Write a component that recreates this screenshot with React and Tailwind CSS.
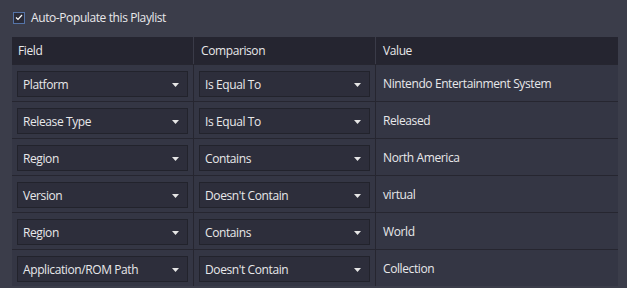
import React from 'react';

const rows = [
  { field: 'Platform', comparison: 'Is Equal To', value: 'Nintendo Entertainment System' },
  { field: 'Release Type', comparison: 'Is Equal To', value: 'Released' },
  { field: 'Region', comparison: 'Contains', value: 'North America' },
  { field: 'Version', comparison: "Doesn't Contain", value: 'virtual' },
  { field: 'Region', comparison: 'Contains', value: 'World' },
  { field: 'Application/ROM Path', comparison: "Doesn't Contain", value: 'Collection' },
];

function Dropdown({ label }) {
  return (
    <div className="flex items-center justify-between h-[26px] mt-[6px] mx-[5px] pl-[5px] pr-[8px] pt-[1px] bg-[#2d2e3b] border border-[#22232c]">
      <span>{label}</span>
      <svg width="7" height="4" viewBox="0 0 7 4">
        <path d="M0 0 L7 0 L3.5 4 Z" fill="#e6e6e6" />
      </svg>
    </div>
  );
}

export default function App() {
  return (
    <div
      className="w-[627px] h-[288px] overflow-hidden bg-[#3b3d4a] text-[#e8e8ea] text-[12px] tracking-[-0.4px]"
      style={{ fontFamily: '"Open Sans", "Noto Sans", sans-serif' }}
    >
      {/* checkbox */}
      <div className="flex items-center h-[37px] pl-[13px] pb-[2px]">
        <div className="flex items-center justify-center w-[12px] h-[12px] border border-[#5574a8] bg-[#2b2c38]">
          <svg width="8" height="7" viewBox="0 0 8 7">
            <path d="M1 3.5 L3 5.5 L7 1" stroke="#ffffff" strokeWidth="1.2" fill="none" />
          </svg>
        </div>
        <span className="ml-[6px]">Auto-Populate this Playlist</span>
      </div>

      {/* table */}
      <div className="ml-[12px] w-[606px] bg-[#343644]">
        <div className="grid grid-cols-[182px_182px_242px] h-[27px] bg-[#252530]">
          <div className="flex items-center pl-[6px] border-r border-[#3a3b48]">Field</div>
          <div className="flex items-center pl-[7px] border-r border-[#3a3b48]">Comparison</div>
          <div className="flex items-center pl-[7px]">Value</div>
        </div>
        {rows.map((r, i) => (
          <div key={i} className="grid grid-cols-[182px_182px_242px] h-[37px] border-t border-[#262630]">
            <div className="border-r border-[#262630]">
              <Dropdown label={r.field} />
            </div>
            <div className="border-r border-[#262630]">
              <Dropdown label={r.comparison} />
            </div>
            <div className="flex items-center pl-[7px] pt-[2px]">{r.value}</div>
          </div>
        ))}
      </div>
    </div>
  );
}
